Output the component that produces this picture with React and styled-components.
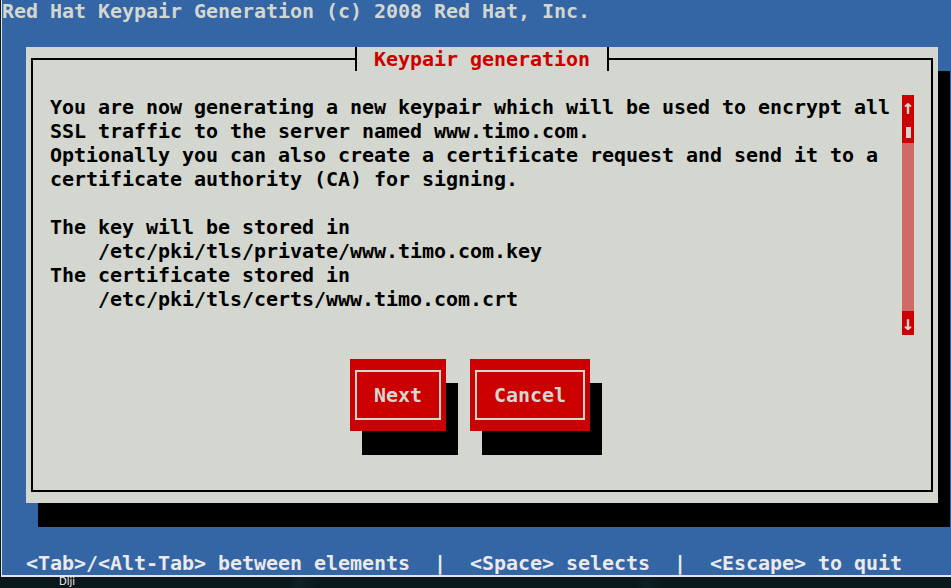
import React from 'react';
import styled, {createGlobalStyle} from 'styled-components';

// terminal cell: 12px x 24px, DejaVu Sans Mono bold 20px
const CELL_W = 12;
const CELL_H = 24;

const GlobalStyle = createGlobalStyle`
  html, body {
    margin: 0;
    padding: 0;
    height: 100%;
    overflow: hidden;
    background: #0a171b;
  }

  body {
    font-family: "DejaVu Sans Mono", "Liberation Mono", monospace;
  }
`;

const Desktop = styled.div`
  width: 951px;
  height: 588px;
  background:
    linear-gradient(105deg, transparent 0 40%, rgba(60, 110, 120, .12) 41%, transparent 43%),
    linear-gradient(100deg, transparent 0 70%, rgba(60, 110, 120, .1) 71%, transparent 73%),
    #0a171b;
`;

const TermWindow = styled.div`
  width: 949px;
  height: 575px;
  margin-left: 1px;
  border-left: 1px solid #e4e6ea;
  border-bottom: 2px solid #e4e6ea;
  background: #3465a4;
  overflow: hidden;
`;

const Screen = styled.div`
  margin-top: -1px;
  display: flex;
  flex-direction: column;
  font-family: "DejaVu Sans Mono", "Liberation Mono", monospace;
  font-weight: bold;
  font-size: 20px;
  letter-spacing: -0.04px;
  line-height: ${CELL_H}px;
`;

const TopLine = styled.div`
  height: ${CELL_H}px;
  color: #d3d7cf;
  white-space: pre;
`;

const Stage = styled.div`
  height: ${CELL_H * 22}px;
  padding: ${CELL_H}px 0 0 ${CELL_W * 2}px;
  box-sizing: border-box;
`;

const Dialog = styled.div`
  width: ${CELL_W * 76}px;
  height: ${CELL_H * 19}px;
  background: #d3d7cf;
  box-shadow: ${CELL_W}px ${CELL_H}px 0 0 #000;
  padding: 0 5px 11px;
  box-sizing: border-box;
  display: flex;
  flex-direction: column;
`;

const FrameTop = styled.div`
  display: flex;
  height: ${CELL_H}px;
`;

const FrameLine = styled.div`
  flex: 1;
  align-self: flex-end;
  height: 13px;
  box-sizing: border-box;
  border-top: 2px solid #000;
  ${props => props.side === 'left' ? 'border-left: 2px solid #000;' : 'border-right: 2px solid #000;'}
`;

const Cap = styled.span`
  width: ${CELL_W}px;
  height: ${CELL_H}px;
  flex: none;
  background:
    linear-gradient(#000, #000) 5px 0 / 2px 100% no-repeat,
    linear-gradient(#000, #000) ${props => props.side === 'left' ? '0' : '6px'} 11px / 6px 2px no-repeat;
`;

const Caption = styled.span`
  padding: 0 ${CELL_W}px;
  color: #cc0000;
  white-space: pre;
`;

const FrameBody = styled.div`
  flex: 1;
  border: 2px solid #000;
  border-top: none;
  padding: ${CELL_H}px 17px 0;
  display: flex;
  flex-direction: column;
`;

const ContentRow = styled.div`
  display: flex;
  height: ${CELL_H * 10}px;
`;

const Message = styled.div`
  flex: 1;
  color: #000;
  white-space: pre;
`;

const ScrollBar = styled.div`
  width: ${CELL_W}px;
  display: flex;
  flex-direction: column;
`;

const ScrollArrow = styled.div`
  height: ${CELL_H}px;
  background: #cc0000;
  color: #d3d7cf;
  text-align: center;
`;

const ScrollThumb = styled.div`
  height: ${CELL_H}px;
  background: #cc0000;
  padding: 8px 0 0 4px;
  box-sizing: border-box;
`;

const ThumbMark = styled.div`
  width: 5px;
  height: 11px;
  background: #d3d7cf;
`;

const ScrollTrough = styled.div`
  flex: 1;
  background: #cf6b66;
`;

const ButtonRow = styled.div`
  display: flex;
  gap: ${CELL_W * 2}px;
  margin-top: ${CELL_H}px;
  padding-left: ${CELL_W * 25}px;
`;

const Button = styled.div`
  width: ${props => props.cols * CELL_W}px;
  height: ${CELL_H * 3}px;
  background: #cc0000;
  box-shadow: ${CELL_W}px ${CELL_H}px 0 0 #000;
  padding: 11px 5px;
  box-sizing: border-box;
`;

const ButtonFace = styled.div`
  height: 100%;
  border: 2px solid #d3d7cf;
  box-sizing: border-box;
  display: flex;
  align-items: center;
  justify-content: center;
  color: #d3d7cf;
`;

const HelpLine = styled.div`
  height: ${CELL_H}px;
  padding-left: ${CELL_W * 2}px;
  color: #e8eaec;
  white-space: pre;
`;

const DesktopLabel = styled.div`
  margin-left: 59px;
  font-family: "DejaVu Sans", sans-serif;
  font-size: 10px;
  line-height: 10px;
  color: #f0f0f0;
`;

const message = `You are now generating a new keypair which will be used to encrypt all
SSL traffic to the server named www.timo.com.
Optionally you can also create a certificate request and send it to a
certificate authority (CA) for signing.

The key will be stored in
    /etc/pki/tls/private/www.timo.com.key
The certificate stored in
    /etc/pki/tls/certs/www.timo.com.crt`;

export default function App() {
  return (
    <>
      <GlobalStyle />
      <Desktop>
        <TermWindow>
          <Screen>
            <TopLine>Red Hat Keypair Generation (c) 2008 Red Hat, Inc.</TopLine>
            <Stage>
              <Dialog>
                <FrameTop>
                  <FrameLine side="left" />
                  <Cap side="left" />
                  <Caption>Keypair generation</Caption>
                  <Cap side="right" />
                  <FrameLine side="right" />
                </FrameTop>
                <FrameBody>
                  <ContentRow>
                    <Message>{message}</Message>
                    <ScrollBar>
                      <ScrollArrow>↑</ScrollArrow>
                      <ScrollThumb><ThumbMark /></ScrollThumb>
                      <ScrollTrough />
                      <ScrollArrow>↓</ScrollArrow>
                    </ScrollBar>
                  </ContentRow>
                  <ButtonRow>
                    <Button cols={8}><ButtonFace>Next</ButtonFace></Button>
                    <Button cols={10}><ButtonFace>Cancel</ButtonFace></Button>
                  </ButtonRow>
                </FrameBody>
              </Dialog>
            </Stage>
            <HelpLine>{'<Tab>/<Alt-Tab> between elements  |  <Space> selects  |  <Escape> to quit'}</HelpLine>
          </Screen>
        </TermWindow>
        <DesktopLabel>Dlji</DesktopLabel>
      </Desktop>
    </>
  );
}
